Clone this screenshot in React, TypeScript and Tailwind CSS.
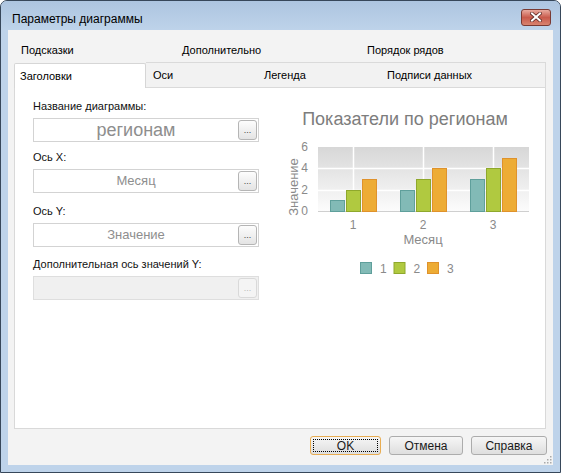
import React from 'react'

const ROW1 = [
  { label: 'Подсказки', w: 'w-[161px]' },
  { label: 'Дополнительно', w: 'w-[185px]' },
  { label: 'Порядок рядов', w: 'flex-1' },
]

const ROW2 = [
  { label: 'Оси', w: 'w-[111px]' },
  { label: 'Легенда', w: 'w-[123px]' },
  { label: 'Подписи данных', w: 'flex-1' },
]

const FIELDS = [
  { label: 'Название диаграммы:', value: 'регионам', big: true, mt: 'mt-0' },
  { label: 'Ось X:', value: 'Месяц', mt: 'mt-[9px]' },
  { label: 'Ось Y:', value: 'Значение', mt: 'mt-[12px]' },
  { label: 'Дополнительная ось значений Y:', value: '', disabled: true, mt: 'mt-[11px]' },
]

const SERIES = [
  { fill: '#82bab6', stroke: '#5f9f9b', dx: -23 },
  { fill: '#b0c940', stroke: '#8fa82c', dx: -7 },
  { fill: '#edac35', stroke: '#df922c', dx: 9 },
]
const GROUPS = [
  { x: 73, label: '1', values: [1, 2, 3] },
  { x: 143, label: '2', values: [2, 3, 4] },
  { x: 213, label: '3', values: [3, 4, 5] },
]

function Chart() {
  const base = 111
  const unit = 64 / 6
  return (
    <svg width="260" height="190" viewBox="0 0 260 190" className="ml-[21px] shrink-0">
      <defs>
        <linearGradient id="plotbg" x1="0" y1="0" x2="0" y2="1">
          <stop offset="0" stopColor="#d7d7d7" />
          <stop offset="1" stopColor="#fcfcfc" />
        </linearGradient>
      </defs>
      <text x="125" y="25" textAnchor="middle" fontSize="18" fill="#7d7d7d" fontFamily="Liberation Sans, Arial, sans-serif">
        Показатели по регионам
      </text>
      <rect x="38" y="47" width="211" height="64" fill="url(#plotbg)" />
      {[73, 143, 213].map(x => (
        <line key={x} x1={x + 0.5} y1="47" x2={x + 0.5} y2={base} stroke="#ffffff" strokeWidth="1.5" />
      ))}
      {[68, 90].map(y => (
        <line key={y} x1="38" y1={y + 0.5} x2="249" y2={y + 0.5} stroke="#ffffff" strokeWidth="1.5" />
      ))}
      <line x1="38" y1={base + 0.5} x2="249" y2={base + 0.5} stroke="#cfcfcf" />
      {GROUPS.map(g =>
        g.values.map((v, i) => {
          const h = Math.round(v * unit)
          return (
            <rect
              key={g.label + i}
              x={g.x + SERIES[i].dx + 0.5}
              y={base - h + 0.5}
              width="14"
              height={h}
              fill={SERIES[i].fill}
              stroke={SERIES[i].stroke}
            />
          )
        })
      )}
      <g fontSize="12" fill="#8a8a8a" textAnchor="end" fontFamily="Liberation Sans, Arial, sans-serif">
        <text x="28" y="51">6</text>
        <text x="28" y="72">4</text>
        <text x="28" y="94">2</text>
        <text x="28" y="115">0</text>
      </g>
      <text
        x="13"
        y="87"
        fontSize="13"
        fill="#8a8a8a"
        textAnchor="middle"
        dominantBaseline="central"
        transform="rotate(-90 13 87)"
        fontFamily="Liberation Sans, Arial, sans-serif"
      >
        Значение
      </text>
      <g fontSize="12" fill="#8a8a8a" textAnchor="middle" fontFamily="Liberation Sans, Arial, sans-serif">
        {GROUPS.map(g => (
          <text key={g.label} x={g.x} y="129">{g.label}</text>
        ))}
      </g>
      <text x="143" y="144" fontSize="13" fill="#8a8a8a" textAnchor="middle" fontFamily="Liberation Sans, Arial, sans-serif">
        Месяц
      </text>
      {SERIES.map((s, i) => (
        <g key={i}>
          <rect x={80 + i * 33.5 + 0.5} y="162.5" width="11" height="11" fill={s.fill} stroke={s.stroke} />
          <text x={100 + i * 33.5} y="173" fontSize="12" fill="#8a8a8a" fontFamily="Liberation Sans, Arial, sans-serif">
            {i + 1}
          </text>
        </g>
      ))}
    </svg>
  )
}

function Field({ value, big, disabled }: { value: string; big?: boolean; disabled?: boolean }) {
  return (
    <div
      className={`mt-[5px] h-[24px] flex items-center border ${
        disabled ? 'bg-[#f0f0f0] border-[#dedede]' : 'bg-white border-[#d3d3d3]'
      }`}
    >
      <span
        className={`flex-1 text-center text-[#8e8e8e] ${big ? 'text-[18px] leading-[20px]' : 'text-[13px] leading-[16px]'}`}
      >
        {value}
      </span>
      <button
        className={`mr-[1px] w-[19px] h-[20px] rounded-[3px] border flex items-end justify-center pb-[4px] text-[9px] leading-none ${
          disabled
            ? 'border-[#d9d9d9] bg-[#f4f4f4] text-[#b8b8b8]'
            : 'border-[#b5b5b5] bg-gradient-to-b from-[#fdfdfd] to-[#e4e4e4] text-[#444]'
        }`}
      >
        ...
      </button>
    </div>
  )
}

function DialogButton({ label, w, primary }: { label: string; w: string; primary?: boolean }) {
  return (
    <button
      className={`${w} h-[19px] rounded-[3px] border bg-gradient-to-b from-[#f6f6f6] to-[#dedede] text-[12px] text-[#1a1a1a] flex items-center justify-center p-[2px] ${
        primary ? 'border-[#e9ad52]' : 'border-[#acacac]'
      }`}
    >
      <span
        className={`w-full h-full flex items-center justify-center leading-none ${
          primary ? 'border border-dotted border-black' : ''
        }`}
      >
        {label}
      </span>
    </button>
  )
}

export default function App() {
  return (
    <div className="w-[561px] h-[473px] flex flex-col rounded-t-[7px] border border-[#37475a] bg-[#bed3ea] overflow-hidden font-['Liberation_Sans',Arial,sans-serif] text-black select-none">
      {/* title bar */}
      <div className="h-[29px] shrink-0 flex items-center pt-[6px] pl-[11px] pr-[9px] bg-gradient-to-b from-[#adc5e0] to-[#bed3ea]">
        <span className="text-[12px] leading-none text-black">Параметры диаграммы</span>
        <button className="ml-auto mt-[-3px] w-[30px] h-[17px] rounded-[3px] border border-[#7a3a33] bg-gradient-to-b from-[#e8aa9f] via-[#c85a4c] to-[#d8836f] flex items-center justify-center">
          <svg width="12" height="10" viewBox="0 0 12 10">
            <path d="M2 1.5 L10 8.5 M10 1.5 L2 8.5" stroke="#5d2a25" strokeWidth="3.6" strokeLinecap="square" />
            <path d="M2 1.5 L10 8.5 M10 1.5 L2 8.5" stroke="#ffffff" strokeWidth="2" strokeLinecap="square" />
          </svg>
        </button>
      </div>

      {/* client area */}
      <div className="relative flex-1 mx-[7px] mb-[7px] bg-[#f3f3f3] flex flex-col pt-[10px] pl-[6px] pr-[7px]">
        <div className="h-[20px] flex items-center text-[11px]">
          {ROW1.map(t => (
            <div key={t.label} className={`${t.w} pl-[7px]`}>
              {t.label}
            </div>
          ))}
        </div>

        <div className="mt-[3px] h-[25px] flex text-[11px]">
          <div className="w-[132px] bg-white border border-b-0 border-[#d6d6d6] rounded-t-[2px] pl-[5px] flex items-center">
            Заголовки
          </div>
          <div className="flex-1 flex items-center border-t border-r border-b border-[#dadada] bg-[#f2f2f2] mt-[-1px]">
            {ROW2.map(t => (
              <div key={t.label} className={`${t.w} pl-[7px]`}>
                {t.label}
              </div>
            ))}
          </div>
        </div>

        <div className="h-[341px] bg-white border border-t-0 border-[#d9d9d9] flex items-start pl-[18px] pt-[12px]">
          <div className="w-[226px] flex flex-col">
            {FIELDS.map(f => (
              <div key={f.label} className={f.mt}>
                <div className="text-[11px] leading-[13px] text-[#111]">{f.label}</div>
                <Field value={f.value} big={f.big} disabled={f.disabled} />
              </div>
            ))}
          </div>
          <Chart />
        </div>

        <div className="mt-[7px] flex justify-end gap-[8px] mr-[-1px]">
          <DialogButton label="OK" w="w-[71px]" primary />
          <DialogButton label="Отмена" w="w-[74px]" />
          <DialogButton label="Справка" w="w-[76px]" />
        </div>

        <svg width="8" height="8" viewBox="0 0 8 8" className="absolute right-[1px] bottom-[1px]">
          {[[6, 0], [6, 3], [3, 3], [6, 6], [3, 6], [0, 6]].map(([x, y]) => (
            <rect key={`${x}-${y}`} x={x} y={y} width="1.5" height="1.5" fill="#a9a9a9" />
          ))}
        </svg>
      </div>
    </div>
  )
}
